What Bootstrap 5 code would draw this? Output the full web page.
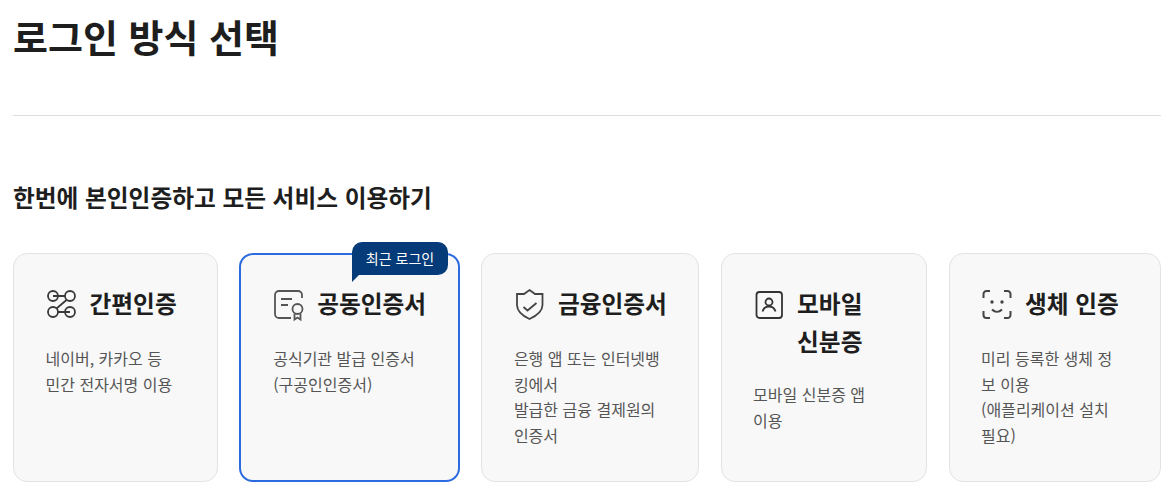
<!DOCTYPE html>
<html lang="ko">
<head>
    <meta charset="UTF-8">
    <meta name="viewport" content="width=device-width, initial-scale=1.0">
    <title>로그인 방식 선택</title>
    <link href="https://cdn.jsdelivr.net/npm/bootstrap@5.3.2/dist/css/bootstrap.min.css" rel="stylesheet">
    <style>
        body {
            font-family: "Noto Sans CJK KR", "Noto Sans", sans-serif;
            color: #1e1e1e;
            background-color: #fff;
        }
        .login-page {
            padding: 0 13px;
        }
        .page-title {
            font-size: 38px;
            font-weight: 700;
            line-height: 72px;
            margin: 0;
            height: 116px;
            border-bottom: 1px solid #dedede;
        }
        .page-sub {
            font-size: 23.7px;
            font-weight: 700;
            line-height: 36px;
            margin: 63px 0 38px;
        }
        .method-grid {
            display: grid;
            grid-template-columns: 205px 221px 218px 206.8px 212px;
            column-gap: 21.2px;
        }
        .method-card {
            position: relative;
            height: 229px;
            background-color: #f8f8f8;
            border: 1px solid #e3e3e3;
            border-radius: 14px;
            padding: 32px 20px 0 31.5px;
        }
        .method-card.is-recent {
            border: 2px solid #2b6bdf;
            padding: 31px 20px 0 32px;
        }
        .method-head {
            display: flex;
            gap: 12px;
            margin-bottom: 24px;
        }
        .method-head svg {
            flex: none;
            width: 32px;
            height: 36px;
        }
        .method-name {
            font-size: 23.7px;
            font-weight: 700;
            line-height: 38px;
            margin: -2px 0;
            white-space: nowrap;
        }
        .method-desc {
            font-size: 16px;
            line-height: 25.6px;
            color: #555;
            margin: 0;
        }
        .recent-tip {
            position: absolute;
            top: -13px;
            right: 10px;
            background-color: #053b78;
            color: #fff;
            font-size: 14px;
            line-height: 33px;
            padding: 0 14px;
            border-radius: 10px 10px 10px 0;
        }
        .recent-tip::after {
            content: "";
            position: absolute;
            left: 0;
            top: 33px;
            border-top: 7px solid #053b78;
            border-right: 7px solid transparent;
        }
    </style>
</head>
<body>
    <div class="login-page">
        <h1 class="page-title">로그인 방식 선택</h1>
        <h2 class="page-sub">한번에 본인인증하고 모든 서비스 이용하기</h2>

        <div class="method-grid">
            <div class="method-card">
                <div class="method-head">
                    <svg viewBox="0 0 32 36" fill="none" stroke="#3a3a3a" stroke-width="1.8">
                        <circle cx="7" cy="10" r="5"/><circle cx="24" cy="10" r="5"/>
                        <circle cx="7" cy="26" r="5"/><circle cx="24" cy="26" r="5"/>
                        <path d="M7 10H19M20.500 14L10.500 22.500M12 26H24"/>
                    </svg>
                    <h3 class="method-name">간편인증</h3>
                </div>
                <p class="method-desc">네이버, 카카오 등<br>민간 전자서명 이용</p>
            </div>
            <div class="method-card is-recent">
                <span class="recent-tip">최근 로그인</span>
                <div class="method-head">
                    <svg viewBox="0 0 32 36" fill="none" stroke="#555" stroke-width="1.8">
                        <path d="M18 32H6a4 4 0 0 1-4-4V9a4 4 0 0 1 4-4h19a4 4 0 0 1 4 4v3"/>
                        <path d="M8 13H19M8 19H15"/>
                        <circle cx="24.500" cy="23" r="5"/>
                        <path d="M21.500 28V33.500L24.500 31.500L27.500 33.500V28"/>
                    </svg>
                    <h3 class="method-name">공동인증서</h3>
                </div>
                <p class="method-desc">공식기관 발급 인증서<br>(구공인인증서)</p>
            </div>
            <div class="method-card">
                <div class="method-head">
                    <svg viewBox="0 0 32 36" fill="none" stroke="#444" stroke-width="1.8">
                        <path d="M15.500 4L21 8H28.500V19C28.500 26 22 30 15.500 33C9 30 3 26 3 19V8H10Z"/>
                        <path d="M9.500 21L13.500 24.500L22.500 17"/>
                    </svg>
                    <h3 class="method-name">금융인증서</h3>
                </div>
                <p class="method-desc">은행 앱 또는 인터넷뱅<br>킹에서<br>발급한 금융 결제원의<br>인증서</p>
            </div>
            <div class="method-card">
                <div class="method-head">
                    <svg viewBox="0 0 32 36" fill="none" stroke="#333" stroke-width="1.8">
                        <rect x="3.500" y="6" width="25.500" height="26" rx="3"/>
                        <circle cx="16" cy="16" r="3.500"/>
                        <path d="M9.500 25.500C10.500 22 13 20.500 16 20.500S21.500 22 22.500 25.500"/>
                    </svg>
                    <h3 class="method-name">모바일<br>신분증</h3>
                </div>
                <p class="method-desc">모바일 신분증 앱<br>이용</p>
            </div>
            <div class="method-card">
                <div class="method-head">
                    <svg viewBox="0 0 32 36" fill="none" stroke="#444" stroke-width="2">
                        <path d="M2.500 12V8a3 3 0 0 1 3-3H9M23 5h3.500a3 3 0 0 1 3 3v4M2.500 25v4a3 3 0 0 0 3 3H9M29.500 25v4a3 3 0 0 1-3 3H23"/>
                        <path d="M11 23.500C14 26.500 18 26.500 21 23.500"/>
                        <circle cx="11" cy="16" r="1.700" fill="#444" stroke="none"/>
                        <circle cx="21" cy="16" r="1.700" fill="#444" stroke="none"/>
                    </svg>
                    <h3 class="method-name">생체 인증</h3>
                </div>
                <p class="method-desc">미리 등록한 생체 정<br>보 이용<br>(애플리케이션 설치<br>필요)</p>
            </div>
        </div>
    </div>
    <script src="https://cdn.jsdelivr.net/npm/bootstrap@5.3.2/dist/js/bootstrap.bundle.min.js"></script>
</body>
</html>
